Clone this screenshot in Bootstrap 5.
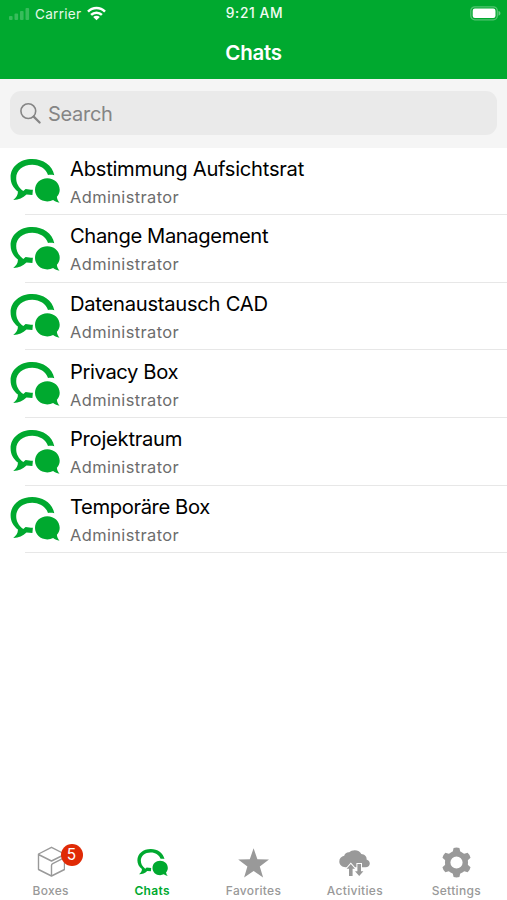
<!DOCTYPE html>
<html lang="en">
<head>
<meta charset="utf-8">
<meta name="viewport" content="width=device-width, initial-scale=1">
<title>Chats</title>
<link href="https://cdn.jsdelivr.net/npm/bootstrap@5.3.0/dist/css/bootstrap.min.css" rel="stylesheet">
<style>
body{font-family:Inter,"Liberation Sans",sans-serif;height:900px;overflow:hidden;background:#fff;color:#000}
svg{display:block;flex:none}
.green{color:#00a92f}
.topbar{background:#00a92f;height:79px;color:#fff}
.status{height:27px;font-size:13.6px;line-height:27px}
.status>div{flex:1 1 0}
.carrier{letter-spacing:.25px;margin-left:5px;margin-right:6px;padding-top:1px;color:#e5f8e9}
.clock{font-weight:500;font-size:13.8px;letter-spacing:.6px;padding-right:2px;white-space:nowrap;color:#f0fbf2}
.title{font-size:20.5px;font-weight:600;line-height:52px;letter-spacing:-.3px;height:52px}
.searchbar{background:#f5f5f5;height:69px;padding:12px 10px 13px}
.field{background:#eaeaea;border-radius:11px;color:#858585;font-size:20px;letter-spacing:-.3px;padding-left:10px}
.field span{margin-left:7px;padding-top:2px}
.chat{height:67.65px;padding-left:10px}
.chat .bubble{width:50px;height:46px;margin-top:10px}
.chat .copy{margin-left:10px}
.name{font-size:20.2px;line-height:25px;letter-spacing:-.27px;margin-top:7.7px}
.name.tight{letter-spacing:-.39px}
.sub{font-size:16.4px;line-height:20px;letter-spacing:.4px;margin-top:6px;color:#6c6c6c;font-weight:400}
.chat::after{content:"";position:absolute;left:25px;right:0;bottom:.6px;height:1px;background:#e7e7e7}
.tabs{height:60px;color:#999;font-size:12px;font-weight:500;letter-spacing:.32px}
.tabs a{flex:1 1 0;color:inherit}
.tabs a.green{color:#00a92f;font-weight:600}
.tabs .glyph{height:40px}
.tabs .text{line-height:16px;margin-top:3px}
.count{left:50%;top:4px;margin-left:10px;width:22px;height:22px;border-radius:50%;background:#e02a05;color:#fff;font-size:15.5px;line-height:22px;font-weight:400}
.drop-2{margin-bottom:2px}
.drop-3{margin-bottom:3px}
</style>
<script src="https://cdn.jsdelivr.net/npm/bootstrap@5.3.0/dist/js/bootstrap.bundle.min.js"></script>
</head>
<body class="d-flex flex-column">
<svg width="0" height="0" class="position-absolute">
  <symbol id="bubbles" viewBox="0 0 50 46">
    <path fill="currentColor" d="M44.300 17.300C42.400 7.600 33.300 1.100 22.200 1.100 10 1.100.6 8.800.6 19.300c0 5.800 2.600 10.700 7.300 14.300.2 3.300-1.500 6-4.600 8.300 5.200.1 9.500-1.700 13.200-5.300l5.900.4.5-5.200c-2.700 0-4.800-.7-7.300-.9l-2.300 2.200C8.400 29.300 6.200 25 6.200 19.900 6.200 12.400 12.800 6.800 22.200 6.800c7.500 0 13.800 4.200 15.800 10.200 2.100-.3 4.500-.2 6.300.3z"/>
    <path fill="currentColor" d="M37.300 20.200c-7 0-12.300 5-12.300 11.600s5.300 11.600 12.300 11.600c2.200 0 4.100-.4 5.800-1.300 1.900 1.500 4 2.400 6.400 2.600-1.600-1.800-2.500-3.800-2.600-5.900 1.800-2 2.800-4.300 2.800-7 0-6.600-5.400-11.600-12.400-11.600z"/>
  </symbol>
</svg>

<header class="topbar flex-shrink-0">
  <div class="status d-flex align-items-center">
    <div class="d-flex align-items-center ps-2">
      <svg width="22" height="14" viewBox="0 0 22 14" fill="#fff" fill-opacity=".22"><rect x="1" y="9" width="3.600" height="4" rx="1"/><rect x="6.500" y="6.500" width="3.600" height="6.500" rx="1"/><rect x="12" y="4" width="3.600" height="9" rx="1"/><rect x="17.500" y="1" width="3.600" height="12" rx="1"/></svg>
      <span class="carrier">Carrier</span>
      <svg width="19" height="15" viewBox="0 0 19 15" fill="none" stroke="#fff" stroke-width="2.500"><path d="M1 5.700C5.800.9 13.200.9 18 5.700M4.100 8.900c3-3 7.800-3 10.800 0"/><path fill="#fff" stroke="none" d="M9.500 14.300 6.200 11c1.900-1.700 4.700-1.700 6.600 0z"/></svg>
    </div>
    <div class="clock text-center">9:21 AM</div>
    <div class="d-flex justify-content-end pe-1">
      <svg width="33" height="15" viewBox="0 0 33 15"><rect x=".8" y=".8" width="26.500" height="13" rx="4" fill="none" stroke="#fff" stroke-opacity=".32" stroke-width="1.300"/><rect x="2.700" y="2.600" width="22.800" height="9.400" rx="2.200" fill="#fff"/><path d="M28.500 5c2.600.7 2.600 4 0 4.700z" fill="#fff" fill-opacity=".4"/></svg>
    </div>
  </div>
  <div class="title text-center">Chats</div>
</header>

<div class="searchbar flex-shrink-0">
  <div class="field d-flex align-items-center h-100">
    <svg width="21" height="22" viewBox="0 0 21 22" fill="none" stroke="currentColor"><circle cx="8.300" cy="9.100" r="7.400" stroke-width="1.600"/><path d="m13.700 14.600 5.900 5.900" stroke-width="2.200" stroke-linecap="round"/></svg>
    <span>Search</span>
  </div>
</div>

<main class="list-group list-group-flush flex-grow-1">
  <div class="chat position-relative d-flex"><svg class="bubble green"><use href="#bubbles"/></svg><div class="copy"><div class="name">Abstimmung Aufsichtsrat</div><div class="sub">Administrator</div></div></div>
  <div class="chat position-relative d-flex"><svg class="bubble green"><use href="#bubbles"/></svg><div class="copy"><div class="name tight">Change Management</div><div class="sub">Administrator</div></div></div>
  <div class="chat position-relative d-flex"><svg class="bubble green"><use href="#bubbles"/></svg><div class="copy"><div class="name">Datenaustausch CAD</div><div class="sub">Administrator</div></div></div>
  <div class="chat position-relative d-flex"><svg class="bubble green"><use href="#bubbles"/></svg><div class="copy"><div class="name tight">Privacy Box</div><div class="sub">Administrator</div></div></div>
  <div class="chat position-relative d-flex"><svg class="bubble green"><use href="#bubbles"/></svg><div class="copy"><div class="name">Projektraum</div><div class="sub">Administrator</div></div></div>
  <div class="chat position-relative d-flex"><svg class="bubble green"><use href="#bubbles"/></svg><div class="copy"><div class="name tight">Temporäre Box</div><div class="sub">Administrator</div></div></div>
</main>

<nav class="tabs d-flex flex-shrink-0 text-center">
  <a class="position-relative text-decoration-none">
    <div class="glyph d-flex justify-content-center align-items-end"><svg width="28" height="32" viewBox="0 0 28 32" fill="none" stroke="currentColor" stroke-width="1.400" stroke-linejoin="round" class="drop-2"><path d="M14.500 1.300 27.500 8v15.500L14.500 30 1.500 23.500V8zM1.500 8.500l13 6.500 13-6.500"/><path d="M14.500 30V19.500q0-1.300 1.200-1.900L27.500 11.700"/></svg></div>
    <span class="count position-absolute">5</span>
    <div class="text">Boxes</div>
  </a>
  <a class="green text-decoration-none">
    <div class="glyph d-flex justify-content-center align-items-end"><svg width="31" height="29" class="drop-3"><use href="#bubbles"/></svg></div>
    <div class="text">Chats</div>
  </a>
  <a class="text-decoration-none">
    <div class="glyph d-flex justify-content-center align-items-end"><svg width="32" height="30" viewBox="0 0 32 30" fill="currentColor" class="drop-2"><path d="m15.600.3 3.800 11 11.600.2-9.200 7 3.300 11-9.500-6.600-9.500 6.600 3.300-11-9.200-7 11.600-.2z"/></svg></div>
    <div class="text">Favorites</div>
  </a>
  <a class="text-decoration-none">
    <div class="glyph d-flex justify-content-center align-items-end"><svg width="32" height="28" viewBox="0 0 32 28" class="drop-2"><path fill="currentColor" d="M6.500 17.200c-3.500 0-6.200-2.300-6.200-5.700 0-3 2-5.200 4.900-5.700.6-2.300 2.700-3.700 5-3.500C11.500 1.200 13.500.3 15.800.3c3 0 5.500 1.500 6.500 3.800 3.300.1 5.600 2.500 5.300 5.300 2 .7 3.200 2.200 3.200 4.100 0 2.200-1.800 3.700-4.200 3.700z"/><g fill="currentColor" stroke="#fff" stroke-width="2" paint-order="stroke"><path d="m11.800 14 4.200 4.800h-2.400V26H10v-7.200H7.600z"/><path d="m20.200 26-4.200-4.800h2.400V14H22v7.200h2.400z"/></g></svg></div>
    <div class="text">Activities</div>
  </a>
  <a class="text-decoration-none">
    <div class="glyph d-flex justify-content-center align-items-end"><svg width="31" height="31" viewBox="0 0 32 32" class="drop-2"><circle cx="16" cy="16" r="9.100" fill="none" stroke="currentColor" stroke-width="5.600"/><g fill="currentColor"><path id="cog" d="m13 1-1.200 5.300h8.400L19 1q-3-1-6 0zM11.800 25.700 13 31q3 1 6 0l1.200-5.300z"/><use href="#cog" transform="rotate(60 16 16)"/><use href="#cog" transform="rotate(120 16 16)"/></g></svg></div>
    <div class="text">Settings</div>
  </a>
</nav>
</body>
</html>
